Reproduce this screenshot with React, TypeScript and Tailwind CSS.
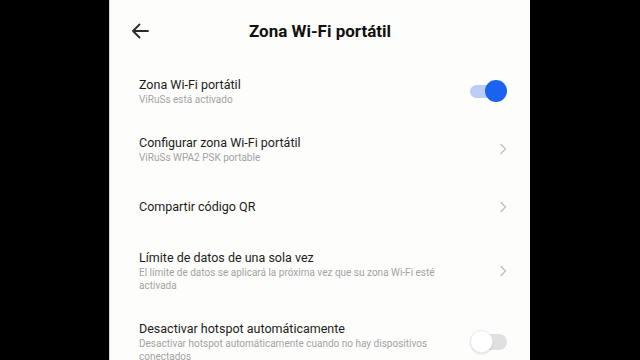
import React from "react";

const font = { fontFamily: "Roboto, 'Noto Sans', sans-serif" };

function Chevron() {
  return (
    <svg width="8" height="12" viewBox="0 0 8 12" className="shrink-0">
      <path d="M1.5 1 L6.5 6 L1.5 11" fill="none" stroke="#bdbdbd" strokeWidth="1.2" />
    </svg>
  );
}

function ToggleOn() {
  return (
    <div className="relative w-[37px] h-[24px] shrink-0 flex items-center">
      <div className="w-[36px] h-[13px] rounded-full bg-[#b9cdf6]" />
      <div className="absolute right-0 top-[1px] w-[22px] h-[22px] rounded-full bg-[#1a62f0]" />
    </div>
  );
}

function ToggleOff() {
  return (
    <div className="relative w-[37px] h-[24px] shrink-0 flex items-center">
      <div className="w-[37px] h-[16px] rounded-full bg-[#e0e0e0]" />
      <div className="absolute left-0 top-0 w-[23px] h-[23px] rounded-full bg-white border border-[#ececec] shadow-[0_1px_2px_rgba(0,0,0,0.12)]" />
    </div>
  );
}

function Row({
  title,
  sub,
  right,
}: {
  title: string;
  sub?: string;
  right: React.ReactNode;
}) {
  return (
    <div className="shrink-0 flex items-center min-h-[57px] py-[14px] pl-[29px] pr-[23px]">
      <div className="flex-1 flex flex-col">
        <div className="text-[12.5px] leading-[17px] text-[#1c1c1c]">{title}</div>
        {sub && (
          <div className="text-[10px] leading-[13px] text-[#a3a3a3] max-w-[300px]">{sub}</div>
        )}
      </div>
      <div className="w-[40px] flex justify-end">{right}</div>
    </div>
  );
}

export default function App() {
  return (
    <div className="w-[640px] h-[360px] bg-black flex overflow-hidden" style={font}>
      <div className="ml-[109px] w-[421px] h-[360px] bg-[#fdfdfb] border-l border-[#d8d8d8] flex flex-col overflow-hidden">
        <div className="shrink-0 relative h-[62px] flex items-center justify-center">
          <svg
            width="18"
            height="16"
            viewBox="0 0 18 16"
            className="absolute left-[21px] top-[23px]"
          >
            <path
              d="M17 8 H2 M8.5 1.5 L2 8 L8.5 14.5"
              fill="none"
              stroke="#2a2a2a"
              strokeWidth="1.8"
              strokeLinecap="round"
              strokeLinejoin="round"
            />
          </svg>
          <div className="text-[17px] font-bold text-[#111] leading-[22px]">Zona Wi-Fi portátil</div>
        </div>
        <Row title="Zona Wi-Fi portátil" sub="ViRuSs está activado" right={<ToggleOn />} />
        <Row
          title="Configurar zona Wi-Fi portátil"
          sub="ViRuSs WPA2 PSK portable"
          right={<Chevron />}
        />
        <Row title="Compartir código QR" right={<Chevron />} />
        <Row
          title="Límite de datos de una sola vez"
          sub="El límite de datos se aplicará la próxima vez que su zona Wi-Fi esté activada"
          right={<Chevron />}
        />
        <Row
          title="Desactivar hotspot automáticamente"
          sub="Desactivar hotspot automáticamente cuando no hay dispositivos conectados"
          right={<ToggleOff />}
        />
      </div>
    </div>
  );
}
